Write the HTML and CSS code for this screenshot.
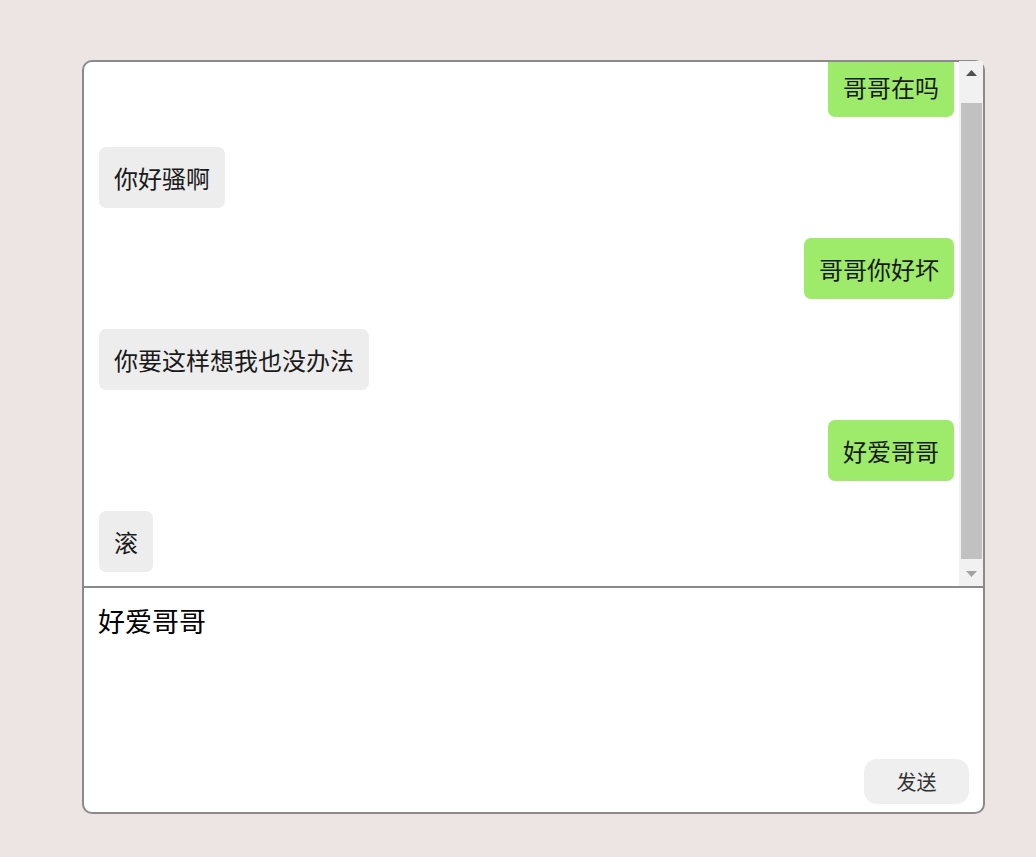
FILE: index.html
```html
<!DOCTYPE html>
<html lang="zh-CN">
<head>
<meta charset="utf-8">
<title>聊天</title>
<link rel="stylesheet" href="styles.css">
</head>
<body>
<div class="chat-box">
  <div class="messages">
    <div class="viewport">
      <div class="message-list">
        <div class="row row-me"><div class="bubble bubble-me">哥哥在吗</div></div>
        <div class="row row-other"><div class="bubble bubble-other">你好骚啊</div></div>
        <div class="row row-me"><div class="bubble bubble-me">哥哥你好坏</div></div>
        <div class="row row-other"><div class="bubble bubble-other">你要这样想我也没办法</div></div>
        <div class="row row-me"><div class="bubble bubble-me">好爱哥哥</div></div>
        <div class="row row-other"><div class="bubble bubble-other">滚</div></div>
      </div>
    </div>
    <div class="scrollbar">
      <div class="sb-btn">
        <svg width="11" height="6" viewBox="0 0 11 6"><polygon points="5.5,0 11,6 0,6" fill="#505050"/></svg>
      </div>
      <div class="sb-track"><div class="sb-thumb"></div></div>
      <div class="sb-btn">
        <svg width="11" height="6" viewBox="0 0 11 6"><polygon points="0,0 11,0 5.5,6" fill="#a3a3a3"/></svg>
      </div>
    </div>
  </div>
  <div class="composer">
    <div class="composer-text">好爱哥哥</div>
    <div class="composer-actions">
      <button class="send-btn" type="button">发送</button>
    </div>
  </div>
</div>
</body>
</html>
```

FILE: styles.css
```css
html, body {
  margin: 0;
  padding: 0;
}

body {
  background: #ede5e3;
  font-family: "Noto Sans CJK SC", "Noto Sans", sans-serif;
  overflow: hidden;
}

.chat-box {
  box-sizing: border-box;
  width: 903px;
  height: 754px;
  margin: 60px 0 0 82px;
  border: 2px solid #8a8a8a;
  border-radius: 10px;
  background: #ffffff;
  display: flex;
  flex-direction: column;
}

.messages {
  height: 524px;
  flex: none;
  display: flex;
  border-bottom: 2px solid #8a8a8a;
}

.viewport {
  flex: 1;
  overflow: hidden;
  display: flex;
  flex-direction: column-reverse;
}

.scrollbar {
  width: 24px;
  flex: none;
  background: #f1f1f1;
  display: flex;
  flex-direction: column;
  margin-top: -1px;
}

.sb-btn {
  height: 24px;
  flex: none;
  display: flex;
  align-items: center;
  justify-content: center;
}

.sb-btn svg {
  display: block;
}

.sb-track {
  flex: 1;
  display: flex;
  flex-direction: column;
  padding: 0 1px 0 2px;
}

.sb-thumb {
  margin-top: 18px;
  height: 456px;
  background: #c1c1c1;
}

.message-list {
  display: flex;
  flex-direction: column;
  gap: 30px;
  padding: 17px 5px 14px 15px;
  flex: none;
}

.row {
  display: flex;
}

.row-me {
  justify-content: flex-end;
}

.row-other {
  justify-content: flex-start;
}

.bubble {
  font-size: 24px;
  line-height: 31px;
  padding: 15px;
  border-radius: 7px;
  color: #1a1a1a;
  white-space: nowrap;
}

.bubble-me {
  background: #9eea6a;
}

.bubble-other {
  background: #ededed;
}

.composer {
  flex: 1;
  display: flex;
  flex-direction: column;
  justify-content: space-between;
  padding: 13px 14px 8px 14px;
}

.composer-text {
  font-size: 27px;
  line-height: 40px;
  color: #000;
}

.composer-actions {
  display: flex;
  justify-content: flex-end;
}

.send-btn {
  width: 105px;
  height: 45px;
  border: none;
  border-radius: 13px;
  background: #efefef;
  color: #333;
  font-family: "Noto Sans CJK SC", "Noto Sans", sans-serif;
  font-size: 20px;
  padding: 0;
}
```
